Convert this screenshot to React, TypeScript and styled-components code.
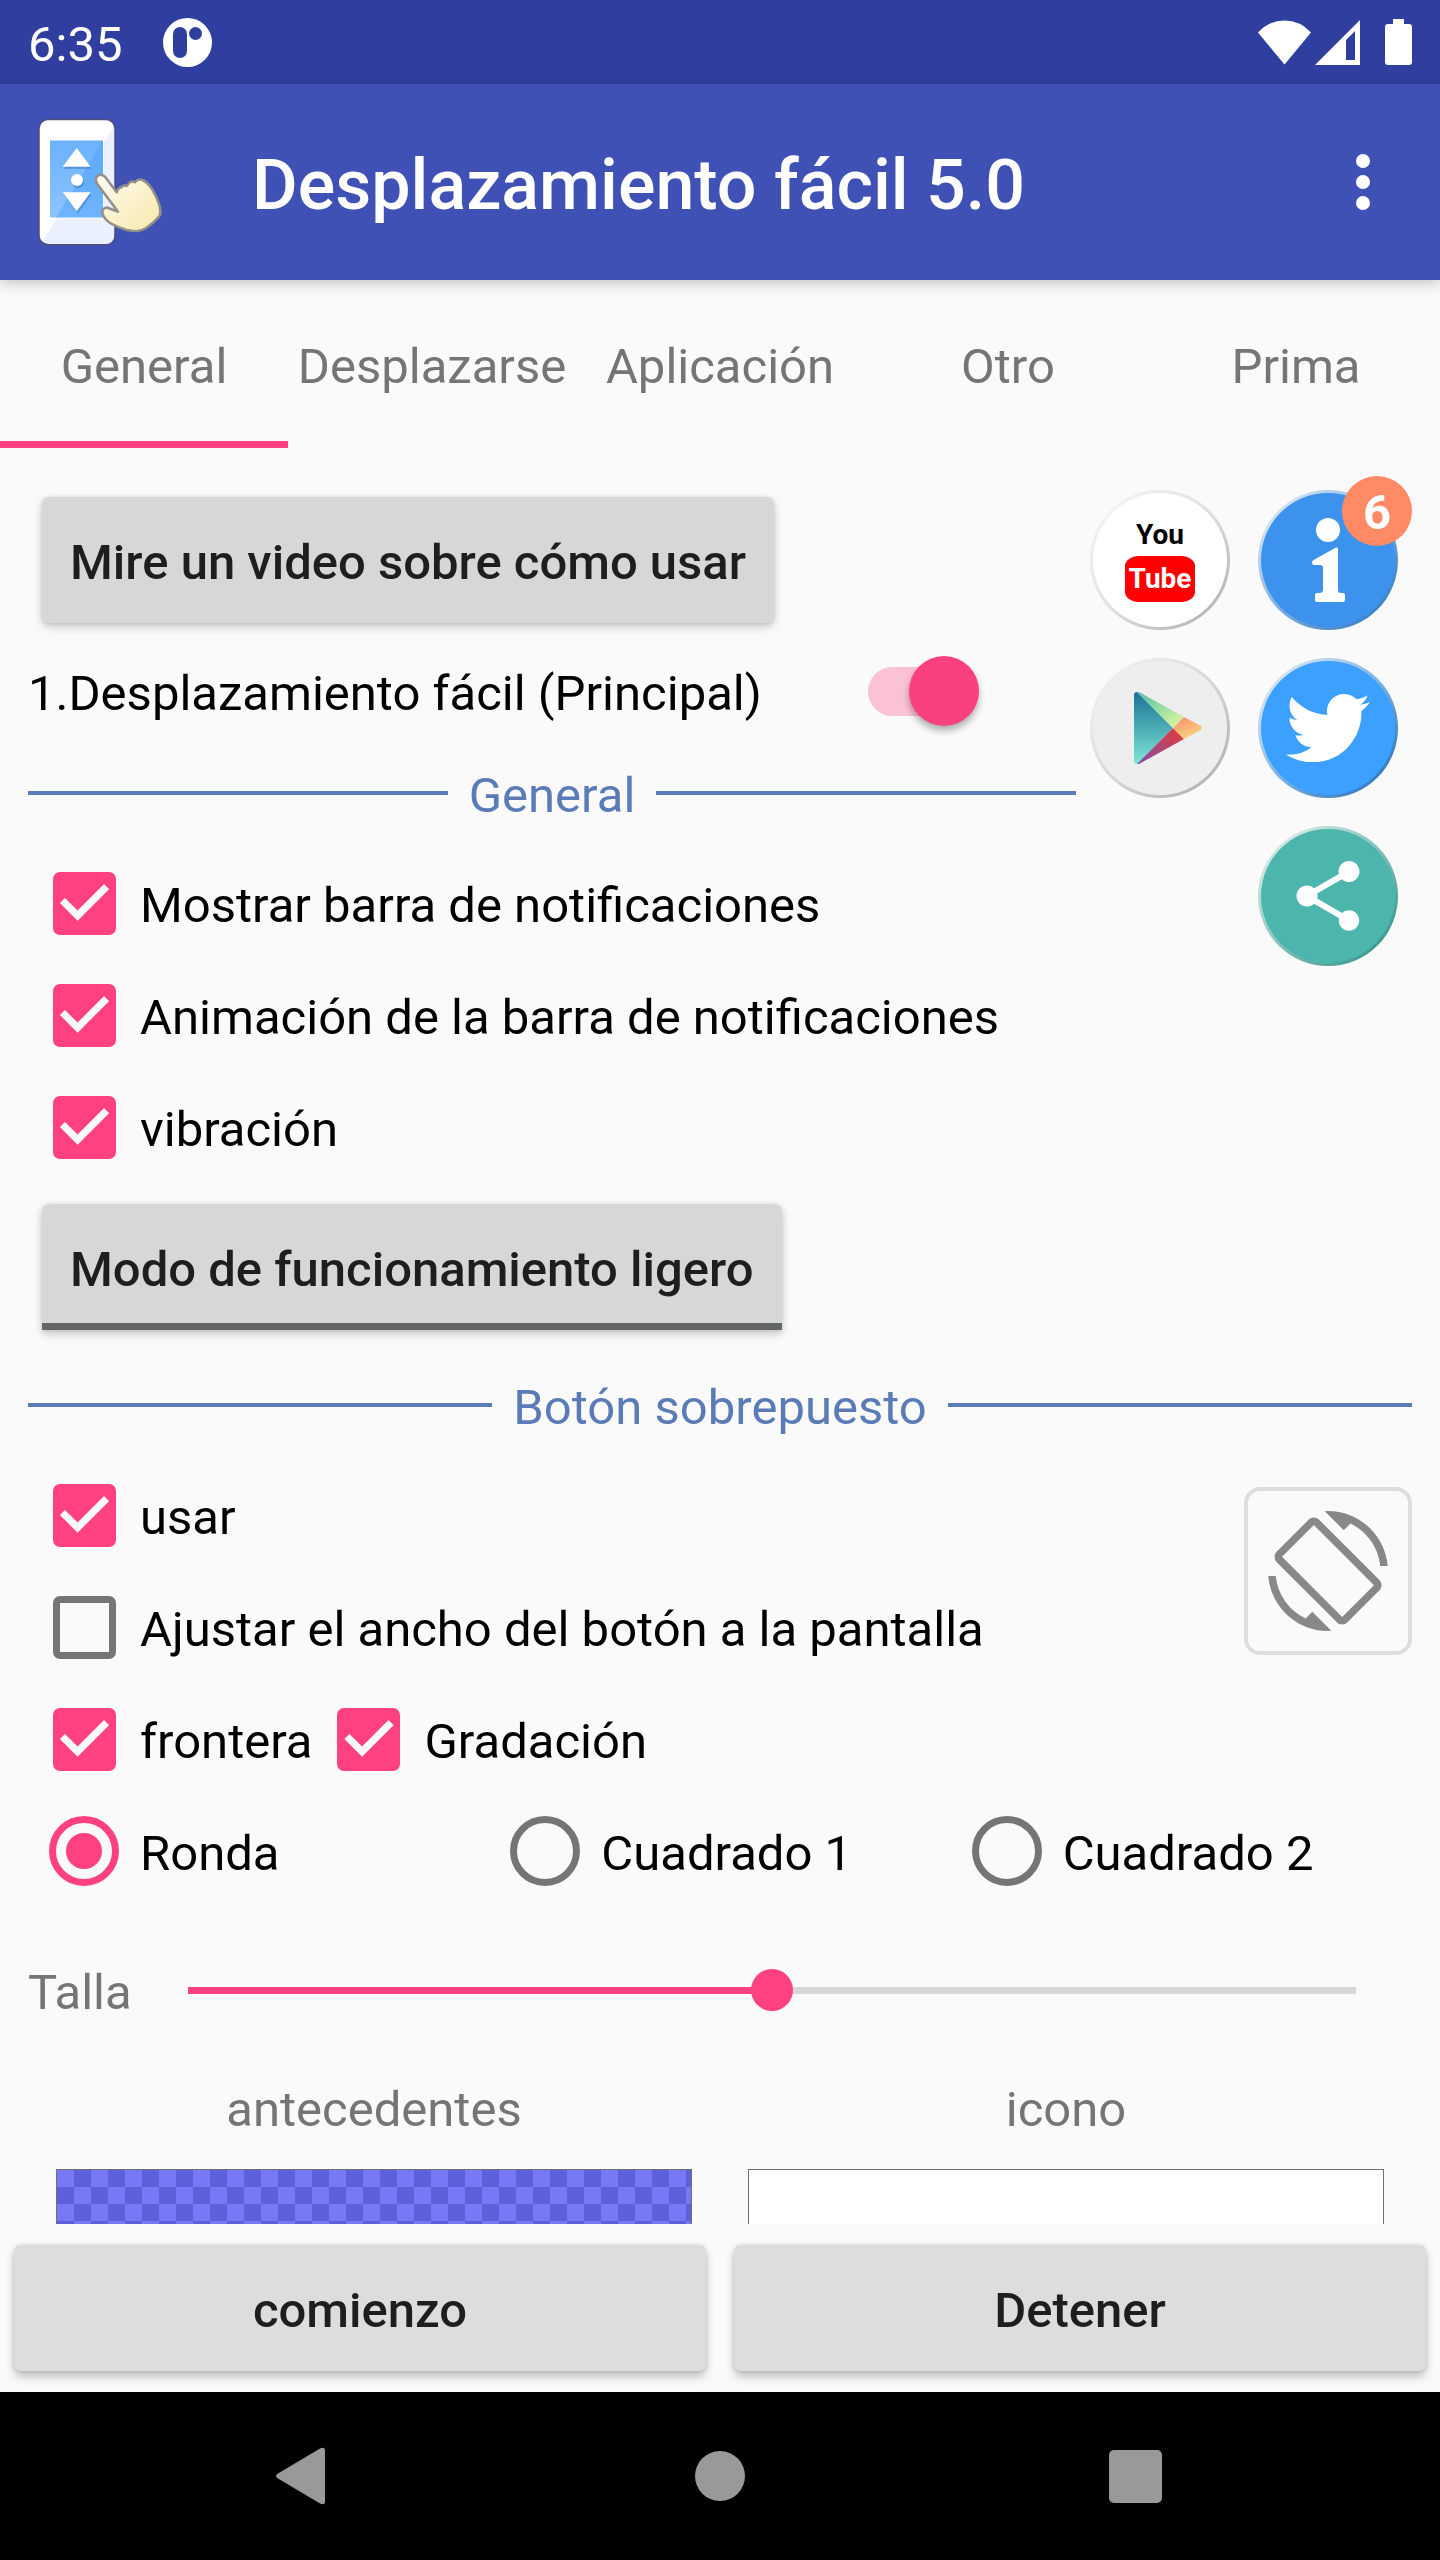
import React, { useState } from 'react';
import styled, { createGlobalStyle, css } from 'styled-components';
import { MdScreenRotation, MdShare } from 'react-icons/md';
import { FaTwitter } from 'react-icons/fa';

const color = {
  primary: '#3f51b5',
  primaryDark: '#303f9f',
  accent: '#ff4081',
  surface: '#fafafa',
  secondaryText: '#757575',
  divider: '#5a7bb5',
  button: '#d6d8d7',
};

const GlobalStyle = createGlobalStyle`
  *, *::before, *::after { box-sizing: border-box; }
  body {
    margin: 0;
    background: ${color.surface};
    font-family: Roboto, "Noto Sans", sans-serif;
    font-size: 49px;
    line-height: 58px;
    color: #000;
  }
  button, input { font: inherit; margin: 0; }
`;

const Screen = styled.div`
  display: flex;
  flex-direction: column;
  height: 100vh;
`;

const plainButton = css`
  border: 0;
  padding: 0;
  background: none;
  cursor: pointer;
`;

/* Text sits slightly below the centre of its line, as with Android font padding. */
const Label = styled.span`
  padding-top: 5px;
  white-space: nowrap;
`;

const StatusBar = styled.header`
  display: flex;
  flex: none;
  align-items: center;
  height: 84px;
  padding: 0 28px;
  background: ${color.primaryDark};
  color: #fff;
`;

const StatusIcons = styled.div`
  display: flex;
  align-items: center;
  margin-left: auto;
`;

const NoticeIcon = styled.svg`
  margin-left: 41px;
`;

const WifiIcon = styled.svg`
  margin-right: 4px;
`;

const SignalIcon = styled.svg`
  margin-right: 25px;
`;

const Toolbar = styled.div`
  display: flex;
  flex: none;
  align-items: center;
  height: 196px;
  padding: 0 28px;
  background: ${color.primary};
  color: #fff;
  box-shadow: 0 4px 12px rgba(0, 0, 0, 0.2);
  z-index: 1;
`;

const Title = styled.h1`
  flex: 1;
  margin: 0 0 0 84px;
  padding-top: 6px;
  font-size: 70px;
  line-height: 82px;
  font-weight: 500;
  white-space: nowrap;
`;

const MenuButton = styled.button`
  ${plainButton}
  display: grid;
  place-items: center;
  width: 98px;
  height: 98px;
`;

const TabList = styled.div`
  display: grid;
  flex: none;
  grid-template-columns: repeat(5, 1fr);
  height: 168px;
`;

const Tab = styled.button<{ $selected: boolean }>`
  ${plainButton}
  display: flex;
  align-items: center;
  justify-content: center;
  color: ${color.secondaryText};
  box-shadow: ${p => (p.$selected ? `inset 0 -7px ${color.accent}` : 'none')};
`;

const Content = styled.main`
  flex: 1;
  min-height: 0;
  padding: 28px 28px 0;
  overflow-y: auto;
  scrollbar-width: none;
`;

const Columns = styled.div`
  display: flex;
  align-items: flex-start;
`;

const MainColumn = styled.div`
  flex: 1;
  min-width: 0;
`;

const RaisedButton = styled.button<{ $underlined?: boolean }>`
  ${plainButton}
  display: flex;
  align-items: center;
  justify-content: center;
  height: 126px;
  margin: 21px 14px;
  padding: 0 28px;
  border-radius: ${p => (p.$underlined ? '7px 7px 0 0' : '7px')};
  background: ${p =>
    p.$underlined ? `linear-gradient(to top, #636763 7px, ${color.button} 7px)` : color.button};
  box-shadow: 0 4px 8px rgba(0, 0, 0, 0.2), 0 0 4px rgba(0, 0, 0, 0.1);
  color: #1e1e1e;
  font-weight: 500;
`;

const SwitchRow = styled.div`
  display: flex;
  align-items: center;
  height: 95px;
`;

const SwitchLabel = styled.label`
  flex: 0 1 840px;
  padding-top: 5px;
  white-space: nowrap;
`;

const Switch = styled.input`
  appearance: none;
  position: relative;
  width: 111px;
  height: 49px;
  border-radius: 25px;
  background: rgba(255, 64, 129, 0.3);
  cursor: pointer;

  &::after {
    content: '';
    position: absolute;
    right: 0;
    top: -11px;
    width: 70px;
    height: 70px;
    border-radius: 50%;
    background: #fb4080;
    box-shadow: 0 5px 7px rgba(0, 0, 0, 0.3);
  }

  &:not(:checked) {
    background: #bdbdbd;
  }

  &:not(:checked)::after {
    right: auto;
    left: 0;
    background: #f1f1f1;
  }
`;

const SectionTitle = styled.h2`
  display: flex;
  align-items: center;
  gap: 21px;
  height: 108px;
  margin: 0;
  color: ${color.divider};
  font-size: 49px;
  font-weight: 400;

  &::before,
  &::after {
    content: '';
    flex: 1;
    height: 4px;
    background: ${color.divider};
  }
`;

const OptionLabel = styled.label`
  display: flex;
  align-items: center;
  height: 112px;
  cursor: pointer;
`;

const OptionRow = styled.div`
  display: flex;
`;

const Checkbox = styled.input`
  appearance: none;
  flex: none;
  width: 63px;
  height: 63px;
  margin: 0 24px 0 25px;
  border: 7px solid ${color.secondaryText};
  border-radius: 7px;

  &:checked {
    border: 0;
    background: ${color.accent};
  }

  &:checked::after {
    content: '';
    display: block;
    width: 63px;
    height: 63px;
    background: ${color.surface};
    clip-path: polygon(39% 78%, 11% 50%, 19% 42%, 39% 62%, 81% 20%, 89% 28%);
  }
`;

const Radio = styled.input`
  appearance: none;
  display: grid;
  place-items: center;
  flex: none;
  width: 70px;
  height: 70px;
  margin: 0 21px;
  border: 7px solid ${color.secondaryText};
  border-radius: 50%;

  &:checked {
    border-color: ${color.accent};
  }

  &:checked::after {
    content: '';
    width: 36px;
    height: 36px;
    border-radius: 50%;
    background: ${color.accent};
  }
`;

const RadioGroup = styled.div`
  display: grid;
  grid-template-columns: repeat(3, 1fr);
`;

const LinkGrid = styled.nav`
  display: grid;
  grid-template-columns: repeat(2, 140px);
  gap: 28px;
  padding: 14px;
`;

const RoundLink = styled.a<{ $fill: string; $rim: string; $lastColumn?: boolean }>`
  display: grid;
  place-items: center;
  position: relative;
  grid-column: ${p => (p.$lastColumn ? 2 : 'auto')};
  width: 140px;
  height: 140px;
  border: 3px solid transparent;
  border-radius: 50%;
  color: #fff;
  text-decoration: none;
  background: linear-gradient(${p => p.$fill}, ${p => p.$fill}) padding-box,
    linear-gradient(135deg, ${p => p.$rim}) border-box;
`;

const Badge = styled.span`
  position: absolute;
  top: -17px;
  right: -17px;
  width: 70px;
  height: 70px;
  border-radius: 50%;
  background: #ff8a65;
  font-weight: 700;
  line-height: 74px;
  text-align: center;
`;

const YouTubeMark = styled.span`
  display: flex;
  flex-direction: column;
  align-items: center;
  gap: 4px;
  color: #000;
  font-size: 28px;
  font-weight: 700;
  line-height: 34px;
`;

const TubeBox = styled.span`
  width: 70px;
  border-radius: 14px / 10px;
  background: #f00;
  color: #fff;
  line-height: 46px;
  text-align: center;
`;

const RotateButton = styled.button`
  ${plainButton}
  display: grid;
  place-items: center;
  width: 168px;
  height: 168px;
  margin-top: 28px;
  border: 4px solid #ddd;
  border-radius: 16px;
  color: #888;
`;

const SliderRow = styled.div`
  display: flex;
  align-items: center;
  height: 166px;
  color: ${color.secondaryText};
`;

const SliderLabel = styled.label`
  padding-top: 5px;
`;

const Slider = styled.input`
  appearance: none;
  flex: 1;
  min-width: 0;
  height: 42px;
  margin: 0 56px;
  background: linear-gradient(${color.accent}, ${color.accent}) left center / 50% 7px no-repeat,
    linear-gradient(#d6d6d6, #d6d6d6) center / 100% 7px no-repeat;

  &::-webkit-slider-thumb {
    appearance: none;
    width: 42px;
    height: 42px;
    border-radius: 50%;
    background: ${color.accent};
  }
`;

const ColorPickers = styled.div`
  display: grid;
  grid-template-columns: repeat(2, 1fr);
`;

const ColorPicker = styled.div`
  display: flex;
  flex-direction: column;
  align-items: center;
  padding: 0 28px;
  color: ${color.secondaryText};
`;

const PickerTitle = styled.span`
  padding: 8px 0 4px;
`;

const Swatch = styled.button<{ $checkered?: boolean }>`
  ${plainButton}
  align-self: stretch;
  height: 126px;
  margin-top: 26px;
  border: 1px solid #707070;
  background: ${p =>
    p.$checkered
      ? 'repeating-conic-gradient(#5f5fdb 0 25%, #7878f6 0 50%) 0 0 / 34px 34px'
      : '#fff'};
`;

const ActionBar = styled.footer`
  display: grid;
  flex: none;
  grid-template-columns: repeat(2, 1fr);
`;

const ActionButton = styled(RaisedButton)`
  background: #ddd;
  box-shadow: 0 6px 10px rgba(0, 0, 0, 0.22), 0 0 5px rgba(0, 0, 0, 0.12);
`;

const SystemNav = styled.nav`
  display: grid;
  flex: none;
  grid-template-columns: repeat(3, 1fr);
  height: 168px;
  padding: 0 97px;
  background: #000;
`;

const SystemButton = styled.button`
  ${plainButton}
  display: grid;
  place-items: center;
`;

function AppLogo() {
  return (
    <svg width="140" height="140" viewBox="0 0 140 140" aria-hidden="true">
      <defs>
        <linearGradient id="glass" x1="0" y1="0" x2="0" y2="1">
          <stop offset="0" stopColor="#6cb0fd" />
          <stop offset="1" stopColor="#8cc5ff" />
        </linearGradient>
        <linearGradient id="skin" x1="0" y1="0" x2="1" y2="1">
          <stop offset="0" stopColor="#fdfaf0" />
          <stop offset="1" stopColor="#f8e9ab" />
        </linearGradient>
      </defs>
      <rect x="11" y="7.500" width="76" height="125" rx="9" fill="#fff" stroke="#4a4f7c" strokeWidth="1.500" />
      <path d="M86 14 V123 Q86 132 77 132 H20 L15 129 Z" fill="#eaf0fe" />
      <rect x="21" y="27" width="55" height="80" fill="#fff" opacity=".7" />
      <rect x="22" y="28.500" width="53" height="77" fill="url(#glass)" />
      <path d="M75 28.500 V105.500 H28 Z" fill="#4b9ffb" opacity=".45" />
      <g fill="#3b74b8" opacity=".55" transform="translate(1 2)">
        <path d="M48.700 36 L62.700 54.700 H34.700 Z" />
        <circle cx="49" cy="68" r="6" />
        <path d="M48.700 99.300 L34.700 80.300 H62.700 Z" />
      </g>
      <g fill="#fff">
        <path d="M48.700 36 L62.700 54.700 H34.700 Z" />
        <circle cx="49" cy="68" r="6" />
        <path d="M48.700 99.300 L34.700 80.300 H62.700 Z" />
      </g>
      <path
        d="M77 64.700 Q72 60.500 68.500 65 Q67 68 69 71.500 L90 99.700 Q84 97.500 79 95.500 Q73.500 96 74.500 102 Q77 108 83 111.500 Q90 115.500 98.700 118 Q105 119.500 110 119 Q115 118 118 116 Q127 110 132 103 Q133 99 131.300 93 Q128.500 84 123.700 76.500 Q119 70 114.500 68 Q110 66.500 107 70.300 Q103.500 68.500 101.300 71 L98.700 74 Q95.500 72.500 93.700 75 Q90 76 88.700 80.300 Z"
        fill="url(#skin)"
        stroke="#939088"
        strokeWidth="2.500"
        strokeLinejoin="round"
      />
    </svg>
  );
}

function InfoIcon() {
  return (
    <svg width="134" height="134" viewBox="3 3 134 134" fill="#fff" aria-hidden="true">
      <circle cx="70" cy="40" r="12" />
      <path d="M78 57.500 Q80 57 80 59 V100 Q80 103 83 103 H85 Q87 103 87 105 V110 Q87 112 85 112 H59 Q57 112 57 110 V105 Q57 103 59 103 H61 Q65 103 65 100 V78 Q65 75 62 75 H56 Q54 75 54 73 Q54 71 55.500 70 Z" />
    </svg>
  );
}

function PlayStoreIcon() {
  return (
    <svg width="134" height="134" viewBox="3 3 134 134" aria-hidden="true">
      <defs>
        <linearGradient id="playBlue" x1="0" y1="0" x2="0" y2="1">
          <stop offset="0" stopColor="#1b7295" />
          <stop offset="1" stopColor="#7fe6d6" />
        </linearGradient>
        <linearGradient id="playGreen" x1="0" y1="0" x2="1" y2="1">
          <stop offset="0" stopColor="#4fbfae" />
          <stop offset="1" stopColor="#e8fc9c" />
        </linearGradient>
        <linearGradient id="playRed" x1="1" y1="0" x2="0" y2="1">
          <stop offset="0" stopColor="#ea3a35" />
          <stop offset="1" stopColor="#7d4fa8" />
        </linearGradient>
        <linearGradient id="playYellow" x1="0" y1="0" x2="0.500" y2="1">
          <stop offset="0" stopColor="#f48c6b" />
          <stop offset="1" stopColor="#fbd27f" />
        </linearGradient>
      </defs>
      <path d="M47 34 L83 70 L47 106 Q44 106 44 103 V37 Q44 34 47 34 Z" fill="url(#playBlue)" />
      <path d="M47 34 H49 L94 59 L83 70 Z" fill="url(#playGreen)" />
      <path d="M47 106 H49 L94 81 L83 70 Z" fill="url(#playRed)" />
      <path d="M94 59 L110 67.500 Q114 70 110 72.500 L94 81 L83 70 Z" fill="url(#playYellow)" />
    </svg>
  );
}

interface CheckOptionProps {
  text: string;
  checked?: boolean;
}

function CheckOption({ text, checked = false }: CheckOptionProps) {
  return (
    <OptionLabel>
      <Checkbox type="checkbox" defaultChecked={checked} />
      <Label>{text}</Label>
    </OptionLabel>
  );
}

const tabs = ['General', 'Desplazarse', 'Aplicación', 'Otro', 'Prima'];
const shapes = ['Ronda', 'Cuadrado 1', 'Cuadrado 2'];

export default function App() {
  const [activeTab, setActiveTab] = useState(tabs[0]);

  return (
    <Screen>
      <GlobalStyle />
      <StatusBar>
        <Label>6:35</Label>
        <NoticeIcon width="49" height="49" viewBox="0 0 49 49" aria-hidden="true">
          <circle cx="24.500" cy="24.500" r="24.500" fill="#fff" />
          <rect x="10" y="9" width="14" height="31" rx="7" fill={color.primaryDark} />
          <circle cx="32.500" cy="15.500" r="6.500" fill={color.primaryDark} />
        </NoticeIcon>
        <StatusIcons>
          <WifiIcon width="53" height="45" viewBox="0 0 53 45" fill="#fff" aria-hidden="true">
            <path d="M0 12.500 Q11 0.500 26.500 0.500 Q42 0.500 53 12.500 L26.500 44.500 Z" />
          </WifiIcon>
          <SignalIcon width="45" height="45" viewBox="0 0 45 45" fill="#fff" aria-hidden="true">
            <path fillRule="evenodd" d="M45 0 V45 H0 Z M31 20 V40 H40 V11 Z" />
          </SignalIcon>
          <svg width="27" height="46" viewBox="0 0 27 46" fill="#fff" aria-hidden="true">
            <path d="M8 0 H19 V5 H24 Q27 5 27 8 V43 Q27 46 24 46 H3 Q0 46 0 43 V8 Q0 5 3 5 H8 Z" />
          </svg>
        </StatusIcons>
      </StatusBar>

      <Toolbar>
        <AppLogo />
        <Title>Desplazamiento fácil 5.0</Title>
        <MenuButton aria-label="Más opciones">
          <svg width="14" height="56" viewBox="0 0 14 56" fill="#fff" aria-hidden="true">
            <circle cx="7" cy="7" r="7" />
            <circle cx="7" cy="28" r="7" />
            <circle cx="7" cy="49" r="7" />
          </svg>
        </MenuButton>
      </Toolbar>

      <TabList role="tablist">
        {tabs.map(tab => (
          <Tab
            key={tab}
            role="tab"
            aria-selected={tab === activeTab}
            $selected={tab === activeTab}
            onClick={() => setActiveTab(tab)}
          >
            <Label>{tab}</Label>
          </Tab>
        ))}
      </TabList>

      <Content>
        <Columns>
          <MainColumn>
            <RaisedButton>
              <Label>Mire un video sobre cómo usar</Label>
            </RaisedButton>
            <SwitchRow>
              <SwitchLabel htmlFor="main-switch">1.Desplazamiento fácil (Principal)</SwitchLabel>
              <Switch id="main-switch" type="checkbox" role="switch" defaultChecked />
            </SwitchRow>
            <SectionTitle>
              <Label>General</Label>
            </SectionTitle>
            <CheckOption text="Mostrar barra de notificaciones" checked />
            <CheckOption text="Animación de la barra de notificaciones" checked />
            <CheckOption text="vibración" checked />
            <RaisedButton $underlined>
              <Label>Modo de funcionamiento ligero</Label>
            </RaisedButton>
          </MainColumn>
          <LinkGrid aria-label="Enlaces">
            <RoundLink href="#youtube" aria-label="YouTube" $fill="#fff" $rim="#f8f8f8, #e0e0e0 50%, #a8a8a8">
              <YouTubeMark>
                You
                <TubeBox>Tube</TubeBox>
              </YouTubeMark>
            </RoundLink>
            <RoundLink href="#info" aria-label="Información" $fill="#3c92ec" $rim="#f0f5fa, #7fb0de 50%, #2373bd">
              <InfoIcon />
              <Badge>6</Badge>
            </RoundLink>
            <RoundLink href="#play" aria-label="Google Play" $fill="#eee" $rim="#f8f8f8, #d8d8d8 50%, #a8a8a8">
              <PlayStoreIcon />
            </RoundLink>
            <RoundLink href="#twitter" aria-label="Twitter" $fill="#3ba0ff" $rim="#f0f5fa, #82b4e2 50%, #1a66b5">
              <FaTwitter size={84} aria-hidden="true" />
            </RoundLink>
            <RoundLink href="#share" aria-label="Compartir" $fill="#4db6ac" $rim="#f0f7f6, #86c3bb 50%, #208a7c" $lastColumn>
              <MdShare size={84} aria-hidden="true" />
            </RoundLink>
          </LinkGrid>
        </Columns>

        <SectionTitle>
          <Label>Botón sobrepuesto</Label>
        </SectionTitle>
        <Columns>
          <MainColumn>
            <CheckOption text="usar" checked />
            <CheckOption text="Ajustar el ancho del botón a la pantalla" />
            <OptionRow>
              <CheckOption text="frontera" checked />
              <CheckOption text="Gradación" checked />
            </OptionRow>
          </MainColumn>
          <RotateButton aria-label="Girar pantalla">
            <MdScreenRotation size={120} aria-hidden="true" />
          </RotateButton>
        </Columns>
        <RadioGroup role="radiogroup" aria-label="Forma">
          {shapes.map((shape, index) => (
            <OptionLabel key={shape}>
              <Radio type="radio" name="shape" defaultChecked={index === 0} />
              <Label>{shape}</Label>
            </OptionLabel>
          ))}
        </RadioGroup>
        <SliderRow>
          <SliderLabel htmlFor="size">Talla</SliderLabel>
          <Slider id="size" type="range" min="0" max="100" defaultValue="50" />
        </SliderRow>
        <ColorPickers>
          <ColorPicker>
            <PickerTitle id="background-color">antecedentes</PickerTitle>
            <Swatch $checkered aria-labelledby="background-color" />
          </ColorPicker>
          <ColorPicker>
            <PickerTitle id="icon-color">icono</PickerTitle>
            <Swatch aria-labelledby="icon-color" />
          </ColorPicker>
        </ColorPickers>
      </Content>

      <ActionBar>
        <ActionButton>
          <Label>comienzo</Label>
        </ActionButton>
        <ActionButton>
          <Label>Detener</Label>
        </ActionButton>
      </ActionBar>

      <SystemNav aria-label="Sistema">
        <SystemButton aria-label="Atrás">
          <svg width="58" height="58" viewBox="0 0 58 58" fill="#999" aria-hidden="true">
            <path d="M44 1.500 Q49 -1 49 4 V54 Q49 59 44 56.500 L2 31.500 Q-2 29 2 26.500 Z" />
          </svg>
        </SystemButton>
        <SystemButton aria-label="Inicio">
          <svg width="50" height="50" viewBox="0 0 50 50" fill="#999" aria-hidden="true">
            <circle cx="25" cy="25" r="25" />
          </svg>
        </SystemButton>
        <SystemButton aria-label="Recientes">
          <svg width="53" height="53" viewBox="0 0 53 53" fill="#999" aria-hidden="true">
            <rect width="53" height="53" rx="5" />
          </svg>
        </SystemButton>
      </SystemNav>
    </Screen>
  );
}
